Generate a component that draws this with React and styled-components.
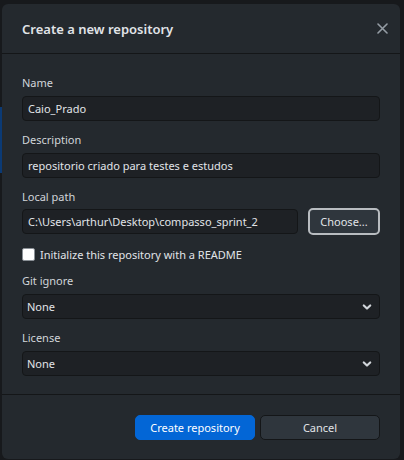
import React from "react";
import styled, { createGlobalStyle } from "styled-components";

const Global = createGlobalStyle`
  html, body { margin: 0; padding: 0; background: #17191c; }
  body { font-family: "Noto Sans", "Open Sans", sans-serif; }
  * { box-sizing: border-box; }
`;

const Screen = styled.div`
  position: relative;
  width: 404px;
  height: 460px;
  overflow: hidden;
  background: #17191c;
  display: flex;
`;

const SideStub = styled.div`
  width: 2px;
  display: flex;
  flex-direction: column;
  padding-top: 107px;
`;

const SelectedItem = styled.div`
  height: 66px;
  background: #0b3a75;
`;

const Dialog = styled.div`
  position: absolute;
  left: 2px;
  top: 4px;
  width: 398px;
  height: 455px;
  background: #24292e;
  border-radius: 6px;
  display: flex;
  flex-direction: column;
  color: #d1d5da;
`;

const Header = styled.div`
  height: 50px;
  flex-shrink: 0;
  display: flex;
  align-items: center;
  justify-content: space-between;
  padding: 0 10px 0 20px;
  border-bottom: 1px solid #141618;
`;

const Title = styled.h1`
  margin: 0;
  font-size: 13px;
  font-weight: 600;
  color: #e1e4e8;
`;

const Close = styled.button`
  border: 0;
  background: none;
  padding: 0;
  width: 16px;
  height: 16px;
  display: flex;
  align-items: center;
  justify-content: center;
  color: #959da5;
`;

const Body = styled.div`
  flex: 1;
  display: flex;
  flex-direction: column;
  padding: 21px 20px 0 20px;
`;

const Field = styled.div`
  display: flex;
  flex-direction: column;
  margin-bottom: ${(p) => p.$mb ?? 11}px;
`;

const Label = styled.label`
  font-size: 11px;
  line-height: 16px;
  color: #d1d5da;
  margin-bottom: ${(p) => p.$mb ?? 5}px;
`;

const Input = styled.div`
  height: 25px;
  border: 1px solid #141618;
  border-radius: 4px;
  background: #1e2125;
  padding: 0 5px;
  display: flex;
  align-items: center;
  font-size: 11px;
  color: #e1e4e8;
  ${(p) => (p.$grow ? "flex: 1;" : "")}
`;

const Row = styled.div`
  display: flex;
  gap: 10px;
  align-items: center;
`;

const ChooseButton = styled.button`
  width: 72px;
  height: 27px;
  border: 2px solid #b8bcc0;
  border-radius: 5px;
  background: #2f363d;
  color: #e1e4e8;
  font-family: inherit;
  font-size: 11px;
  padding: 0;
`;

const CheckRow = styled.label`
  display: flex;
  align-items: center;
  gap: 5px;
  font-size: 11px;
  color: #e1e4e8;
  margin: 13px 0 12px;
  height: 13px;
`;

const Box = styled.span`
  width: 13px;
  height: 13px;
  border-radius: 2px;
  background: #ffffff;
  border: 1px solid #8a9096;
`;

const Select = styled(Input)`
  justify-content: space-between;
  padding: 0 6px 0 4px;
`;

const Footer = styled.div`
  height: 65px;
  flex-shrink: 0;
  border-top: 1px solid #141618;
  display: flex;
  justify-content: flex-end;
  align-items: flex-start;
  gap: 5px;
  padding: 20px 20px 0;
`;

const Btn = styled.button`
  width: 120px;
  height: 25px;
  border-radius: 5px;
  font-family: inherit;
  font-size: 11px;
  padding: 0;
  border: 1px solid ${(p) => (p.$primary ? "#0366d6" : "#141618")};
  background: ${(p) => (p.$primary ? "#0366d6" : "#2f363d")};
  color: ${(p) => (p.$primary ? "#ffffff" : "#e1e4e8")};
`;

const Chevron = () => (
  <svg width="12" height="12" viewBox="0 0 12 12" fill="none">
    <path d="M2.8 4.5 L6 7.5 L9.2 4.5" stroke="#d1d5da" strokeWidth="2.2" strokeLinecap="round" strokeLinejoin="round" />
  </svg>
);

export default function App() {
  return (
    <>
      <Global />
      <Screen>
        <SideStub>
          <SelectedItem />
        </SideStub>
        <Dialog>
          <Header>
            <Title>Create a new repository</Title>
            <Close aria-label="Close">
              <svg width="11" height="11" viewBox="0 0 11 11">
                <path d="M1 1 L10 10 M10 1 L1 10" stroke="#959da5" strokeWidth="1.6" strokeLinecap="round" />
              </svg>
            </Close>
          </Header>
          <Body>
            <Field>
              <Label>Name</Label>
              <Input>Caio_Prado</Input>
            </Field>
            <Field>
              <Label>Description</Label>
              <Input>repositorio criado para testes e estudos</Input>
            </Field>
            <Field $mb={0}>
              <Label $mb={3}>Local path</Label>
              <Row>
                <Input $grow>C:\Users\arthur\Desktop\compasso_sprint_2</Input>
                <ChooseButton>Choose...</ChooseButton>
              </Row>
            </Field>
            <CheckRow>
              <Box />
              Initialize this repository with a README
            </CheckRow>
            <Field>
              <Label>Git ignore</Label>
              <Select>
                None
                <Chevron />
              </Select>
            </Field>
            <Field>
              <Label>License</Label>
              <Select>
                None
                <Chevron />
              </Select>
            </Field>
          </Body>
          <Footer>
            <Btn $primary>Create repository</Btn>
            <Btn>Cancel</Btn>
          </Footer>
        </Dialog>
      </Screen>
    </>
  );
}
